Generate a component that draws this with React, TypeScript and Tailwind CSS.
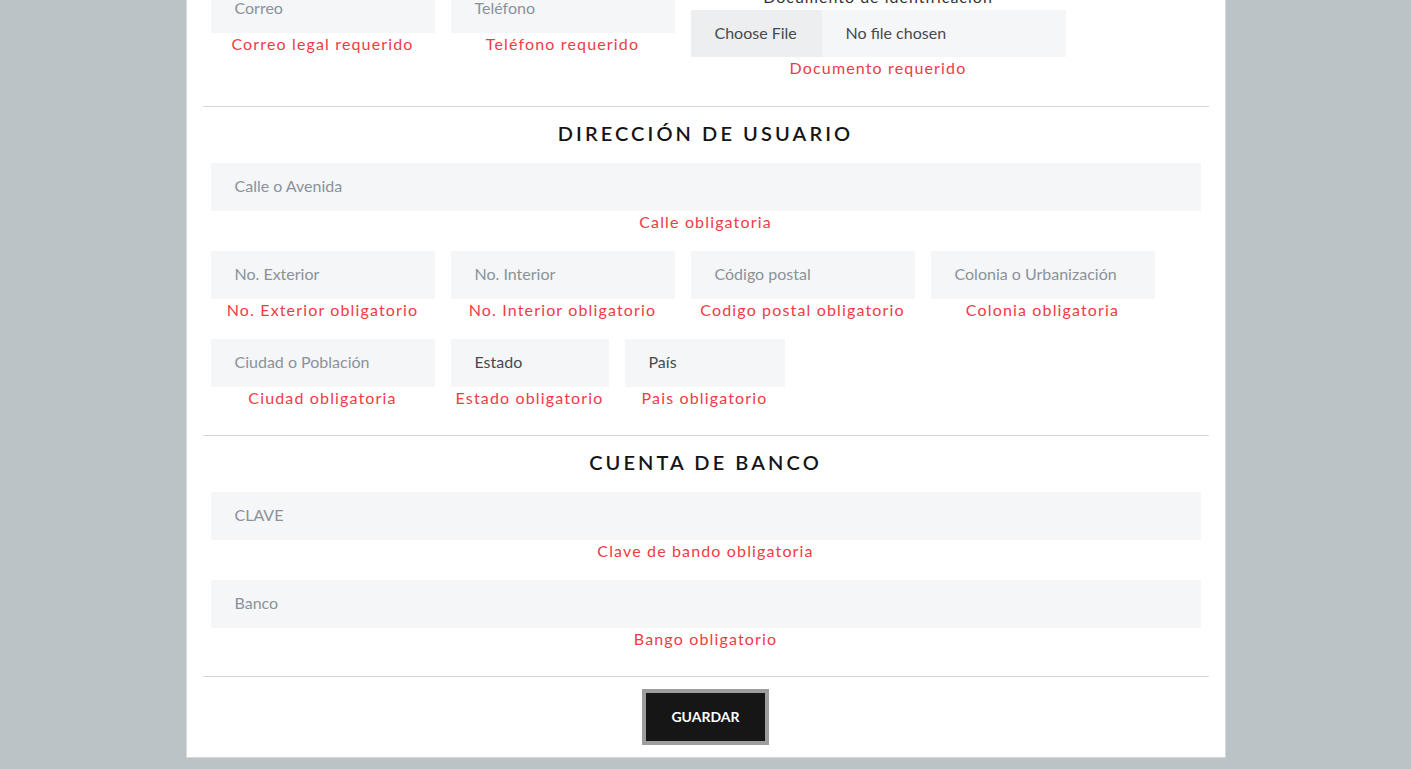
import React from "react";

const font = { fontFamily: "Lato, 'Noto Sans', sans-serif" };

function Field({ w, text, err, dark }: { w: string; text: string; err: string; dark?: boolean }) {
  return (
    <div className={`${w} flex flex-col items-center shrink-0`}>
      <div
        className={`w-full h-[48px] bg-[#f5f6f8] pl-6 pb-[2px] flex items-center text-[16px] ${
          dark ? "text-[#454a4f]" : "text-[#8a929b]"
        }`}
      >
        {text}
      </div>
      <div className="h-[24px] leading-[22px] text-[16px] tracking-[1.15px] text-[#ef3b46] whitespace-nowrap">{err}</div>
    </div>
  );
}

function Heading({ children }: { children: React.ReactNode }) {
  return (
    <>
      <div className="h-px bg-[#d6d6d6]" />
      <div className="pt-[12px] h-[41px] leading-[28px] text-center text-[20px] font-semibold tracking-[3.1px] text-[#151515]">
        {children}
      </div>
    </>
  );
}

export default function App() {
  return (
    <div className="min-h-screen bg-[#bbc3c6] overflow-hidden" style={font}>
      <div className="mx-auto w-[1040px] bg-white border border-t-0 border-[#d9d9d9] px-4 -mt-[15px] mb-[12px]">
        <div className="flex gap-4 px-2 items-start">
          <Field w="w-[224px]" text="Correo" err="Correo legal requerido" />
          <Field w="w-[224px]" text="Teléfono" err="Teléfono requerido" />
          <div className="w-[375px] flex flex-col items-center">
            <div className="h-[25px] leading-[23px] text-[16px] tracking-[1px] text-[#333]">Documento de identificación</div>
            <div className="w-full h-[47px] bg-[#f5f6f8] flex items-center text-[16px] text-[#454a4f]">
              <div className="h-full w-[131px] bg-[#eceef0] flex items-center pl-6 pb-[2px]">Choose File</div>
              <div className="pl-6 pb-[2px]">No file chosen</div>
            </div>
            <div className="h-[24px] leading-[22px] text-[16px] tracking-[1.15px] text-[#ef3b46]">Documento requerido</div>
          </div>
        </div>

        <div className="mt-[25px]">
          <Heading>DIRECCIÓN DE USUARIO</Heading>
        </div>
        <div className="mt-[15px] px-2 flex flex-col gap-4">
          <Field w="w-full" text="Calle o Avenida" err="Calle obligatoria" />
          <div className="flex gap-4">
            <Field w="w-[224px]" text="No. Exterior" err="No. Exterior obligatorio" />
            <Field w="w-[224px]" text="No. Interior" err="No. Interior obligatorio" />
            <Field w="w-[224px]" text="Código postal" err="Codigo postal obligatorio" />
            <Field w="w-[224px]" text="Colonia o Urbanización" err="Colonia obligatoria" />
          </div>
          <div className="flex gap-4">
            <Field w="w-[224px]" text="Ciudad o Población" err="Ciudad obligatoria" />
            <Field w="w-[158px]" text="Estado" err="Estado obligatorio" dark />
            <Field w="w-[160px]" text="País" err="Pais obligatorio" dark />
          </div>
        </div>

        <div className="mt-[24px]">
          <Heading>CUENTA DE BANCO</Heading>
        </div>
        <div className="mt-[15px] px-2 flex flex-col gap-4">
          <Field w="w-full" text="CLAVE" err="Clave de bando obligatoria" />
          <Field w="w-full" text="Banco" err="Bango obligatorio" />
        </div>

        <div className="mt-[24px] h-px bg-[#d6d6d6]" />
        <div className="flex justify-center pt-[12px] pb-[12px]">
          <button className="w-[127px] h-[56px] border-4 border-[#9d9d9d] bg-[#161616] text-white text-[14px] font-bold pb-[2px]">
            GUARDAR
          </button>
        </div>
      </div>
    </div>
  );
}
